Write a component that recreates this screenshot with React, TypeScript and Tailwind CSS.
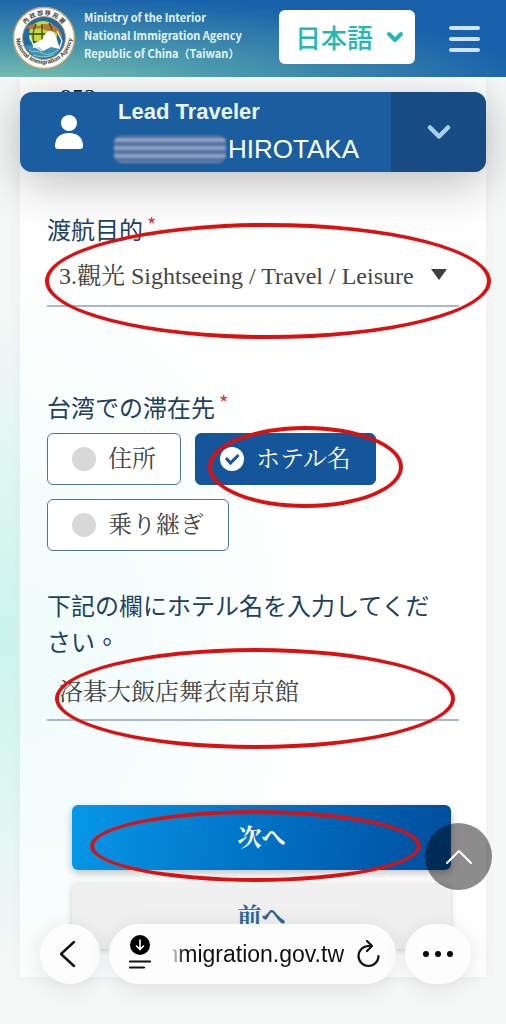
import { ChevronDown, ChevronUp } from 'lucide-react'
import type { ReactNode } from 'react'

const STAYS = [
  { value: 'address', label: '住所', selected: false },
  { value: 'hotel', label: 'ホテル名', selected: true },
  { value: 'transit', label: '乗り継ぎ', selected: false },
]

const SERIF = "font-['Liberation_Serif','Noto_Serif_CJK_JP','Noto_Sans_CJK_JP',serif]"

function Ring({ className }: { className: string }) {
  return (
    <span
      aria-hidden="true"
      className={`pointer-events-none absolute z-10 rounded-[50%] border-4 border-[#dc1010] ${className}`}
    />
  )
}

function Required() {
  return <span className="ml-1 align-top text-xl leading-7 text-[#e03131]">*</span>
}

function Seal() {
  return (
    <svg viewBox="0 0 64 64" className="mb-0.5 size-16 shrink-0" role="img" aria-label="National Immigration Agency">
      <defs>
        <path id="seal-top" d="M9 32a23 23 0 0 1 46 0" />
        <path id="seal-bottom" d="M4 30a28 28 0 0 0 56 0" />
      </defs>
      <circle cx="32" cy="32" r="30.5" fill="#fdfcf8" stroke="#c9a878" strokeWidth="1.5" />
      <circle cx="32" cy="32" r="21.5" fill="#1d6ca8" stroke="#c8a26a" strokeWidth="1" />
      <path d="M13 39c4 2 7-1 11 1s7 3 10 1 10 0 17-3c-3 9-10 14-19 14s-16-5-19-13z" fill="#3f93b5" />
      <path d="M17 44c5 3 8 0 13 3s10 1 16-3M21 49c6 2 15 3 21-1" fill="none" stroke="#8fc7cf" strokeWidth="1" />
      <circle cx="31" cy="29" r="14" fill="#c6d936" />
      <path d="M14 22c3-4 8-5 12-2 5-2 12-4 17 0 5 3 7 8 8 13-3-3-5-6-9-7-5-2-8 0-12-4-5 1-10 2-16 0z" fill="#b97838" />
      <path d="M17 28h16M30 18v22M24 18c-4 7-4 17 0 22M37 17c2 3 3 6 3 9M19 36h10" fill="none" stroke="#2d4b22" strokeWidth="1.3" />
      <path d="M21 39c2-3 6-4 10-6 1-4 5-9 9-8 3 2 4 6 5 9l3 9-9-2-8 4-4-4-6 1z" fill="#fff" />
      <path d="M18 31l4 9 8 5M45 25l5 10-3 8" fill="none" stroke="#e4ecea" strokeWidth="1.4" />
      <text className="font-['Noto_Sans_CJK_TC',sans-serif] font-bold" fontSize="6" fill="#444">
        <textPath href="#seal-top" startOffset="50%" textAnchor="middle">內 政 部 移 民 署</textPath>
      </text>
      <text className="font-['Liberation_Sans',sans-serif] font-bold" fontSize="6" fill="#333">
        <textPath href="#seal-bottom" startOffset="50%" textAnchor="middle">National Immigration Agency</textPath>
      </text>
    </svg>
  )
}

function SiteHeader() {
  return (
    <header className="relative z-20 flex h-[77px] items-center bg-[radial-gradient(ellipse_at_0%_115%,#83c9b0_0%,#4c9bad_32%,#1961aa_75%)] pl-3 pr-[26px]">
      <Seal />
      <p className="ml-2 flex-1 whitespace-nowrap pb-2 font-['Noto_Sans_CJK_TC','Noto_Sans',sans-serif] text-[11px] font-bold leading-[18px] text-[#e3f4fb]">
        Ministry of the Interior
        <br />
        National Immigration Agency
        <br />
        Republic of China（Taiwan）
      </p>
      <button
        type="button"
        className="mb-1 flex h-[54px] w-[136px] items-center justify-between rounded-md bg-white pl-4 pr-2 font-['Noto_Sans_CJK_JP',sans-serif] text-[26px] font-medium text-[#22b8b5]"
      >
        日本語
        <ChevronDown className="size-6" strokeWidth={4} />
      </button>
      <button type="button" aria-label="Menu" className="ml-[34px] flex w-[31px] flex-col gap-[7px]">
        <span className="h-1 w-full rounded-full bg-[#cfe3ff]" />
        <span className="h-1 w-full rounded-full bg-[#cfe3ff]" />
        <span className="h-1 w-full rounded-full bg-[#cfe3ff]" />
      </button>
    </header>
  )
}

function TravelerBar() {
  return (
    <section className="relative flex h-20 overflow-hidden rounded-xl bg-[#1b5e9f] text-white shadow-[0_10px_50px_rgba(0,0,0,0.28)]">
      <div className="flex w-[98px] items-center justify-center">
        <svg viewBox="0 0 28 34" className="h-[34px] w-7" fill="currentColor" aria-hidden="true">
          <circle cx="14" cy="8" r="8" />
          <path d="M0 31c0-8 5-13 14-13s14 5 14 13q0 3-3 3H3q-3 0-3-3z" />
        </svg>
      </div>
      <div className="flex-1 whitespace-nowrap font-['Liberation_Sans',sans-serif]">
        <h2 className="mt-1 text-[22px] font-bold leading-8 text-[#e8f6ff]">Lead Traveler</h2>
        <div className="flex items-center">
          <span
            aria-hidden="true"
            className="-ml-1 mr-0.5 h-7 w-[112px] rounded-lg bg-[repeating-linear-gradient(180deg,#4f6f9f_0px,#4f6f9f_2px,#a8b8d4_5px,#4f6f9f_8px)] blur-[1px]"
          />
          <span className="text-[26px] leading-[42px]">HIROTAKA</span>
        </div>
      </div>
      <button type="button" aria-label="Show travelers" className="flex w-[95px] items-center justify-center bg-[#174c82]">
        <ChevronDown className="size-9 text-[#a9cdf3]" strokeWidth={3} />
      </button>
    </section>
  )
}

function StayOption({ value, label, selected, children }: { value: string; label: string; selected: boolean; children?: ReactNode }) {
  return (
    <label
      className={`relative flex h-[52px] items-center gap-3 rounded-md border px-6 text-2xl ${
        selected ? 'border-[#15569a] bg-[#15569a] text-white' : 'border-[#4e7595] bg-white text-[#444]'
      }`}
    >
      <span className="relative flex size-6">
        <input
          type="radio"
          name="stay"
          value={value}
          defaultChecked={selected}
          className="size-6 appearance-none rounded-full bg-[#d8d8d8] checked:bg-white"
        />
        {selected && (
          <svg viewBox="0 0 24 24" className="pointer-events-none absolute inset-0 size-6" fill="none" stroke="#15569a" strokeWidth="3" aria-hidden="true">
            <path d="M6 11l4.500 5 8-8" />
          </svg>
        )}
      </span>
      {label}
      {children}
    </label>
  )
}

function BrowserBar() {
  return (
    <nav className="fixed bottom-10 left-10 right-[35px] z-30 flex h-[60px] gap-[9px] text-[#111]">
      <button type="button" aria-label="Back" className="flex w-[60px] items-center justify-center rounded-full bg-[#fdfdfd] pr-1 shadow-[0_4px_24px_rgba(0,0,0,0.1)]">
        <svg viewBox="0 0 16 28" className="h-7 w-4" fill="none" stroke="currentColor" strokeWidth="2.400" strokeLinecap="round" strokeLinejoin="round" aria-hidden="true">
          <path d="M14 2L1 14l13 12" />
        </svg>
      </button>
      <div className="flex min-w-0 flex-1 items-center rounded-full bg-[#fdfdfd] pl-5 pr-4 shadow-[0_4px_24px_rgba(0,0,0,0.1)]">
        <svg viewBox="0 0 22 34" className="mb-1 h-[34px] w-[22px] shrink-0" fill="none" stroke="#111" strokeLinecap="round" aria-hidden="true">
          <circle cx="11" cy="10" r="10" fill="#000" stroke="none" />
          <path d="M11 5v9M7.500 11l3.500 3.500 3.500-3.500" stroke="#fff" strokeWidth="1.600" />
          <path d="M1 26.500h20M1 32.500h14" strokeWidth="2.200" />
        </svg>
        <a
          href="#address"
          className="ml-5 flex flex-1 justify-end overflow-hidden whitespace-nowrap font-['Liberation_Sans',sans-serif] text-[23px] [mask-image:linear-gradient(90deg,transparent,black_12px)]"
        >
          immigration.gov.tw
        </a>
        <button type="button" aria-label="Reload" className="ml-3">
          <svg viewBox="0 0 24 28" className="h-7 w-6" fill="none" stroke="currentColor" strokeWidth="2.200" strokeLinecap="round" strokeLinejoin="round" aria-hidden="true">
            <path d="M16 6H12.500a10 10 0 1 0 10 10M11 1l5 5-5 5" />
          </svg>
        </button>
      </div>
      <button type="button" aria-label="More" className="flex w-[66px] items-center justify-center gap-[6px] rounded-full bg-[#fdfdfd] shadow-[0_4px_24px_rgba(0,0,0,0.1)]">
        <span className="size-[6px] rounded-full bg-black" />
        <span className="size-[6px] rounded-full bg-black" />
        <span className="size-[6px] rounded-full bg-black" />
      </button>
    </nav>
  )
}

export default function App() {
  return (
    <div className={`relative min-h-screen overflow-hidden bg-[#f6f7f7] bg-[radial-gradient(ellipse_120px_340px_at_0%_62%,#c9f5ec_0%,#f6f7f7_100%)] pb-[46px] ${SERIF}`}>
      <SiteHeader />
      <main className="mx-5 bg-white bg-[radial-gradient(ellipse_300px_420px_at_0%_65%,#effdfb_0%,#ffffff_100%)] shadow-[0_0_12px_rgba(0,0,0,0.04)]">
        <p className="h-[15px] pl-10 pt-2 text-2xl leading-6 text-[#222]">952</p>
        <TravelerBar />
        <form className="relative px-[27px] pb-7 pt-[39px]" onSubmit={(e) => e.preventDefault()}>
          <div className="relative">
            <label htmlFor="purpose" className="block font-['Noto_Sans_CJK_JP',sans-serif] text-2xl leading-9 text-[#1f405e]">
              渡航目的
              <Required />
            </label>
            <select
              id="purpose"
              className="h-[60px] w-full appearance-none border-b-2 border-[#a9b8c6] bg-transparent pl-3 text-2xl text-[#444]"
            >
              <option>3.觀光 Sightseeing / Travel / Leisure</option>
            </select>
            <svg viewBox="0 0 16 11" className="pointer-events-none absolute bottom-[27px] right-3 h-[11px] w-4" fill="#3f3f3f" aria-hidden="true">
              <path d="M0 0h16L8 11z" />
            </svg>
            <Ring className="-bottom-8 -left-0.5 -right-8 top-3" />
          </div>

          <fieldset className="mt-[82px]">
            <legend className="font-['Noto_Sans_CJK_JP',sans-serif] text-2xl leading-9 text-[#1f405e]">
              台湾での滞在先
              <Required />
            </legend>
            <div className="mt-2 flex flex-wrap gap-[14px]">
              {STAYS.map((stay) => (
                <StayOption key={stay.value} {...stay}>
                  {stay.selected && <Ring className="-bottom-6 -right-7 -top-2 left-3" />}
                </StayOption>
              ))}
            </div>
          </fieldset>

          <div className="relative mt-9">
            <label htmlFor="hotel" className="block pr-5 font-['Noto_Sans_CJK_TC',sans-serif] text-2xl leading-9 text-[#1f405e]">
              下記の欄にホテル名を入力してください。
            </label>
            <input
              id="hotel"
              defaultValue="洛碁大飯店舞衣南京館"
              className="h-[62px] w-full border-b-2 border-[#a9b8c6] bg-transparent pl-3 text-2xl text-[#444]"
            />
            <Ring className="-bottom-7 left-2 right-1 top-[61px]" />
          </div>

          <div className="mt-[84px] flex flex-col gap-[14px] pl-[25px] pr-2 text-2xl font-bold">
            <button
              type="submit"
              className="relative h-[65px] rounded-md bg-[linear-gradient(100deg,#0797e8_0%,#0072c4_50%,#0150a0_95%)] text-white shadow-[0_3px_8px_rgba(0,0,0,0.25)]"
            >
              次へ
              <Ring className="-bottom-3 left-[18px] right-[30px] top-[5px]" />
            </button>
            <button type="button" className="h-[65px] rounded-md bg-[#f0f0f0] text-[#2f659c] shadow-[0_1px_6px_rgba(0,0,0,0.2)]">
              前へ
            </button>
          </div>
        </form>
      </main>

      <button
        type="button"
        aria-label="Back to top"
        className="fixed bottom-[134px] right-[14px] z-20 flex size-[67px] items-center justify-center rounded-full bg-black/45 text-white"
      >
        <ChevronUp className="size-12" strokeWidth={1} />
      </button>
      <BrowserBar />
    </div>
  )
}
